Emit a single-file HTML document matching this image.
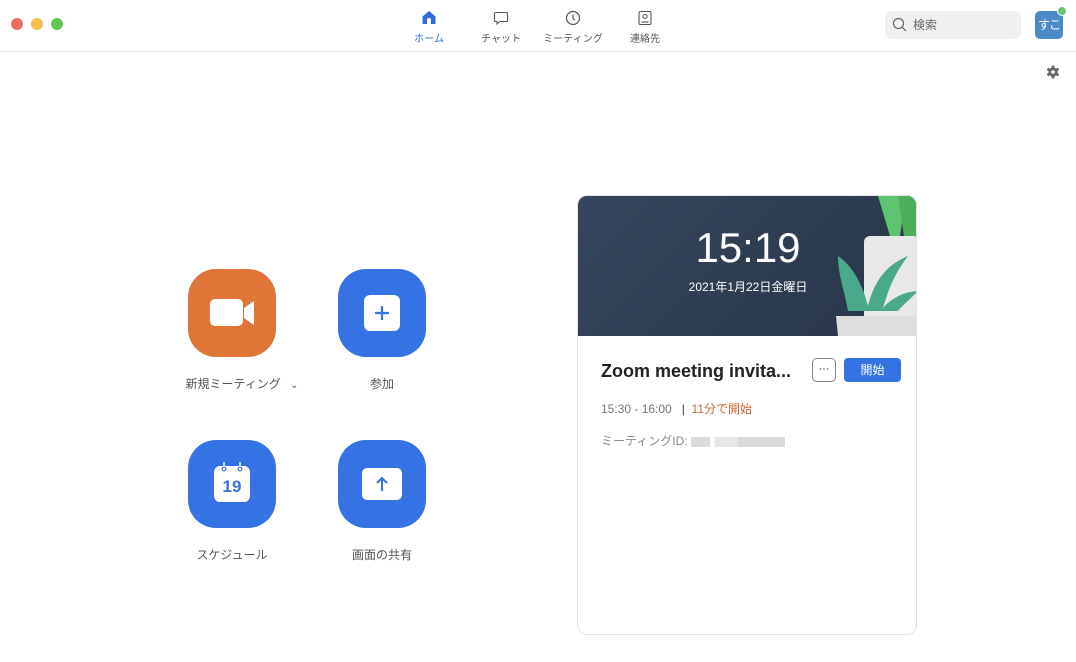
<!DOCTYPE html>
<html><head><meta charset="utf-8"><style>
*{margin:0;padding:0;box-sizing:border-box}
body{width:1076px;height:662px;background:#fff;font-family:"Liberation Sans","Noto Sans CJK JP",sans-serif;position:relative;overflow:hidden;color:#333}
.a{position:absolute}
.dot{position:absolute;top:18px;width:12px;height:12px;border-radius:50%}
.tab{position:absolute;top:30px;font-size:10px;color:#555;text-align:center;width:80px}
.btn{position:absolute;width:88px;height:88px;border-radius:28px;background:#3572e3}
.lbl{position:absolute;font-size:12px;color:#555;text-align:center;width:140px}
</style></head><body>
<div class="dot" style="left:11px;background:#ed6a5e"></div>
<div class="dot" style="left:31px;background:#f5bf4f"></div>
<div class="dot" style="left:51px;background:#61c554"></div>
<div class="a" style="left:0;top:51px;width:1076px;height:1px;background:#e6e6e6"></div>

<svg class="a" style="left:421px;top:10px" width="16" height="15" viewBox="0 0 16 15"><path d="M8 1L1.5 6.5V14H6V10a2 2 0 0 1 4 0v4h4.5V6.5Z" fill="#2f6ce0"/></svg>
<div class="tab" style="left:389px;color:#2f6ce0">ホーム</div>
<svg class="a" style="left:493px;top:11px" width="16" height="15" viewBox="0 0 16 15"><path d="M2.5 1.5h11a1 1 0 0 1 1 1v7a1 1 0 0 1-1 1H7l-3 2.5v-2.5H2.5a1 1 0 0 1-1-1v-7a1 1 0 0 1 1-1z" fill="none" stroke="#555" stroke-width="1.1"/></svg>
<div class="tab" style="left:461px">チャット</div>
<svg class="a" style="left:565px;top:10px" width="16" height="16" viewBox="0 0 16 16"><circle cx="8" cy="8" r="6.5" fill="none" stroke="#555" stroke-width="1.2"/><path d="M8 4.5V8.5l2 1.5" fill="none" stroke="#555" stroke-width="1.2"/></svg>
<div class="tab" style="left:533px">ミーティング</div>
<svg class="a" style="left:637px;top:10px" width="16" height="16" viewBox="0 0 16 16"><rect x="2" y="1.5" width="12" height="13" rx="1.5" fill="none" stroke="#555" stroke-width="1.1"/><circle cx="8" cy="6.5" r="2" fill="none" stroke="#555" stroke-width="1.1"/><path d="M4.5 12h7" stroke="#555" stroke-width="1.2"/></svg>
<div class="tab" style="left:605px">連絡先</div>

<div class="a" style="left:885px;top:11px;width:136px;height:28px;border-radius:7px;background:#f0f0f1"></div>
<svg class="a" style="left:892px;top:17px" width="15" height="15" viewBox="0 0 15 15"><circle cx="6.5" cy="6.5" r="5" fill="none" stroke="#666" stroke-width="1.2"/><path d="M10 10l4 4" stroke="#666" stroke-width="1.2"/></svg>
<div class="a" style="left:913px;top:16px;font-size:12px;color:#666">検索</div>
<div class="a" style="left:1035px;top:11px;width:28px;height:28px;border-radius:5px;background:#4b8ac6;color:#fff;font-size:12px;line-height:28px;text-align:center;letter-spacing:-1px">すこ</div>
<div class="a" style="left:1057px;top:6px;width:10px;height:10px;border-radius:50%;background:#6cc46c;border:1px solid #fff"></div>
<svg class="a" style="left:1046px;top:65px" width="14" height="14" viewBox="0 0 14 14"><g fill="#666"><circle cx="7" cy="7" r="4.6"/><rect x="5.6" y="0.5" width="2.8" height="13" rx="0.8"/><rect x="5.6" y="0.5" width="2.8" height="13" rx="0.8" transform="rotate(60 7 7)"/><rect x="5.6" y="0.5" width="2.8" height="13" rx="0.8" transform="rotate(120 7 7)"/></g><circle cx="7" cy="7" r="1.8" fill="#fff"/></svg>

<div class="btn" style="left:188px;top:269px;background:#e07538"></div>
<svg class="a" style="left:210px;top:299px" width="45" height="28" viewBox="0 0 45 28"><rect x="0" y="0" width="33" height="27" rx="5" fill="#fff"/><path d="M34 9L44 2V26L34 19Z" fill="#fff"/></svg>
<div class="lbl" style="left:172px;top:375px">新規ミーティング <span style="font-size:10px;margin-left:6px">⌄</span></div>
<div class="btn" style="left:338px;top:269px"></div>
<div class="a" style="left:364px;top:295px;width:36px;height:36px;border-radius:6px;background:#fff"></div>
<svg class="a" style="left:372px;top:303px" width="20" height="20" viewBox="0 0 20 20"><path d="M10 3v14M3 10h14" stroke="#3572e3" stroke-width="2.2"/></svg>
<div class="lbl" style="left:312px;top:375px">参加</div>

<div class="btn" style="left:188px;top:440px"></div>
<div class="a" style="left:214px;top:466px;width:36px;height:36px;border-radius:6px;background:#fff;color:#3572e3;font-weight:bold;font-size:17px;text-align:center;line-height:42px">19</div>
<svg class="a" style="left:219px;top:462px" width="26" height="10" viewBox="0 0 26 10"><g fill="none" stroke="#3572e3" stroke-width="1.2"><circle cx="5" cy="7" r="1.8" fill="#fff"/><circle cx="21" cy="7" r="1.8" fill="#fff"/></g><path d="M5 0v5M21 0v5" stroke="#fff" stroke-width="1.4"/></svg>
<div class="lbl" style="left:162px;top:546px">スケジュール</div>
<div class="btn" style="left:338px;top:440px"></div>
<div class="a" style="left:362px;top:468px;width:40px;height:32px;border-radius:5px;background:#fff"></div>
<svg class="a" style="left:372px;top:474px" width="20" height="20" viewBox="0 0 20 20"><path d="M10 17V4M5 9l5-5 5 5" fill="none" stroke="#3572e3" stroke-width="2"/></svg>
<div class="lbl" style="left:312px;top:546px">画面の共有</div>

<div class="a" style="left:577px;top:195px;width:340px;height:440px;border:1px solid #e3e3e3;border-radius:10px;overflow:hidden">
 <div class="a" style="left:0;top:0;width:340px;height:140px;background:linear-gradient(135deg,#36465c,#28354a)"></div>
 <svg class="a" style="left:250px;top:0" width="90" height="140" viewBox="0 0 90 140"><path d="M50 0L62 40H72L78 0Z" fill="#5ec46f"/><path d="M70 0L76 40H90V0Z" fill="#4fae5c"/><rect x="36" y="40" width="56" height="100" rx="6" fill="#e8e8e8"/><path d="M10 60C25 70 35 90 40 110 45 90 55 70 80 60 65 80 60 95 55 112 65 100 80 95 90 95 80 105 72 112 70 115H20C18 100 10 80 10 60Z" fill="#4aa98a"/><path d="M8 120h80v20H10Z" fill="#dedede"/></svg>
 <div class="a" style="left:0;top:28px;width:340px;text-align:center;color:#fff;font-size:42px;font-weight:300">15:19</div>
 <div class="a" style="left:0;top:82px;width:340px;text-align:center;color:#fff;font-size:12px">2021年1月22日金曜日</div>
 <div class="a" style="left:23px;top:165px;font-size:18px;font-weight:bold;color:#222">Zoom meeting invita...</div>
 <div class="a" style="left:234px;top:162px;width:24px;height:24px;border:1px solid #888;border-radius:5px;font-size:11px;text-align:center;line-height:20px;color:#333">···</div>
 <div class="a" style="left:266px;top:162px;width:57px;height:24px;border-radius:4px;background:#3572e3;color:#fff;font-size:12px;text-align:center;line-height:24px">開始</div>
 <div class="a" style="left:23px;top:204px;font-size:12px;color:#777">15:30 - 16:00 &nbsp;&nbsp;<span style="color:#333">|</span>&nbsp;&nbsp;<span style="color:#c8693a">11分で開始</span></div>
 <div class="a" style="left:23px;top:236px;font-size:12px;color:#888">ミーティングID: <span style="display:inline-block;width:94px;height:10px;background:linear-gradient(90deg,#ccc 20%,#fff 20% 25%,#ddd 25% 50%,#ccc 50%);opacity:.7;vertical-align:middle"></span></div>
</div>
</body></html>
